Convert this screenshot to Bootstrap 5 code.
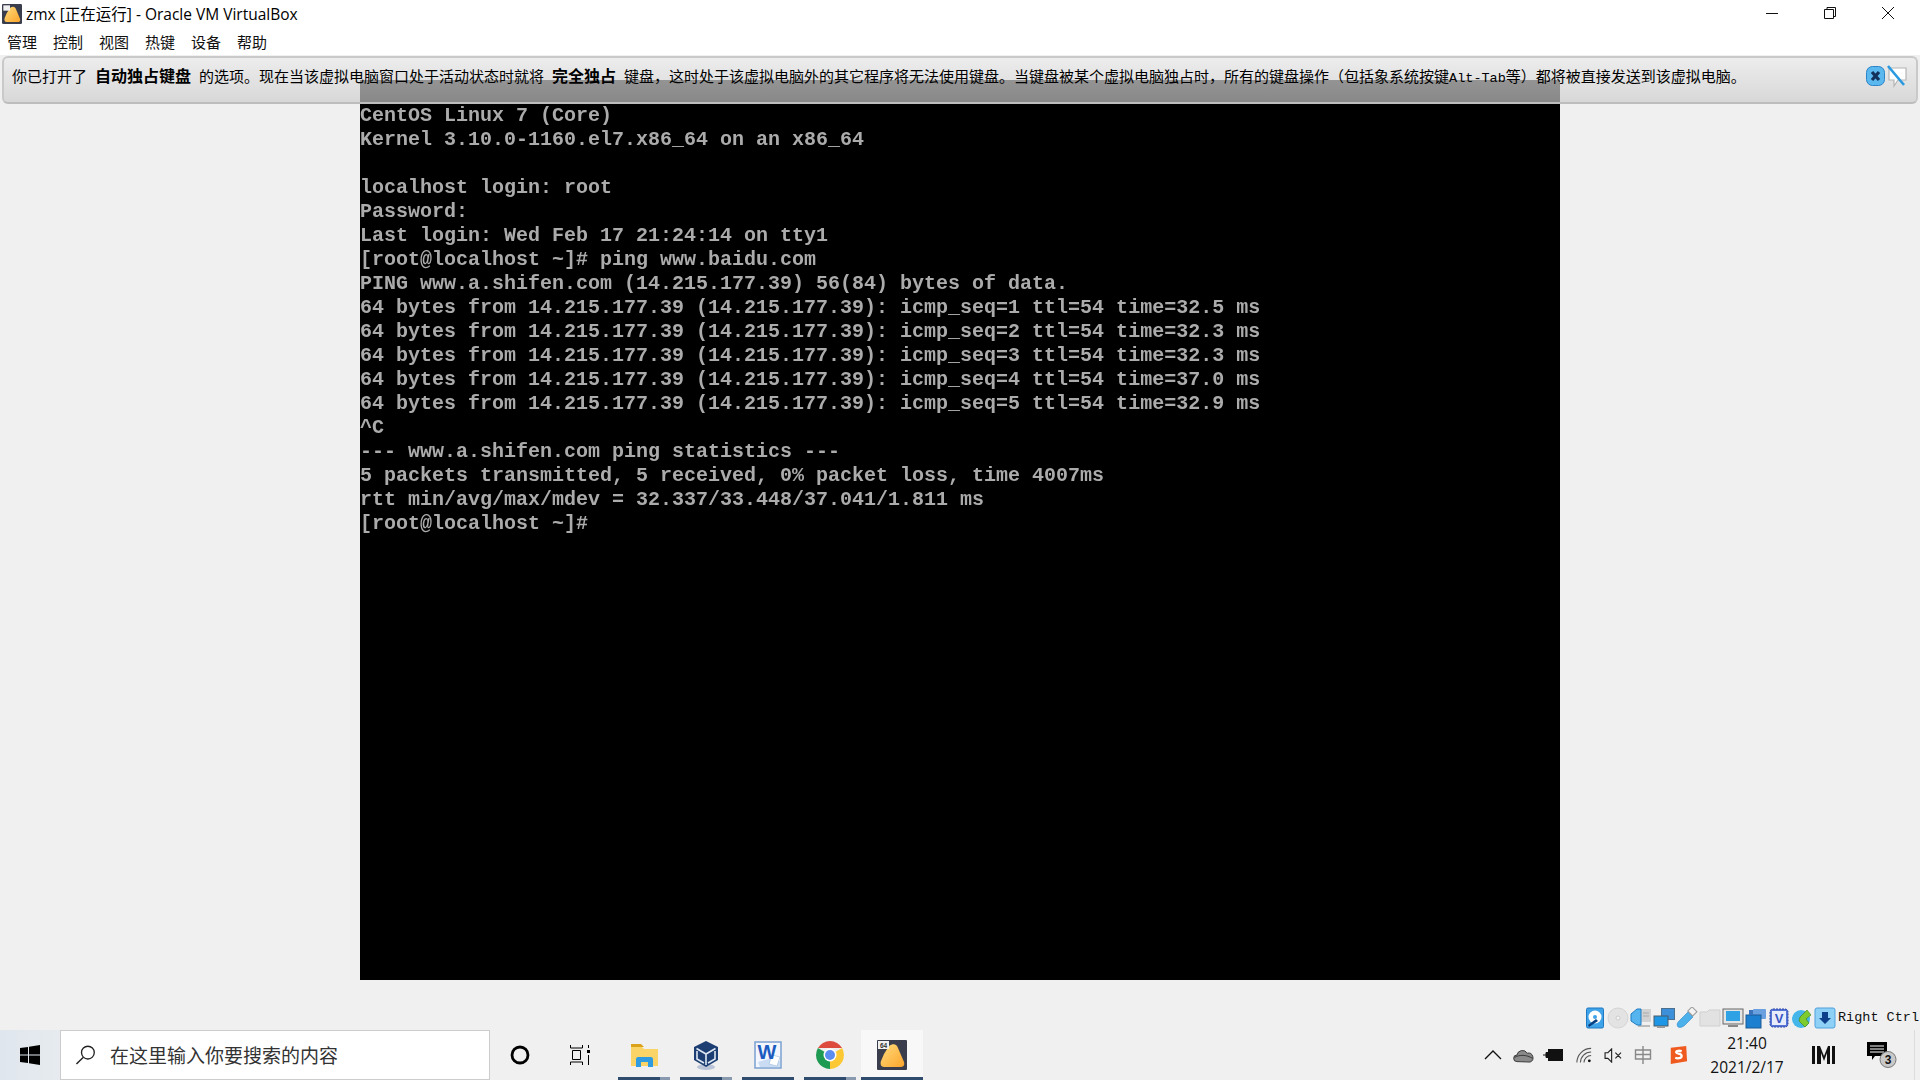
<!DOCTYPE html>
<html lang="zh">
<head>
<meta charset="utf-8">
<title>zmx [正在运行] - Oracle VM VirtualBox</title>
<link href="https://cdn.jsdelivr.net/npm/bootstrap@5.3.0/dist/css/bootstrap.min.css" rel="stylesheet">
<style>
html,body{height:1080px;overflow:hidden}
body{font-family:"Noto Sans CJK SC","Liberation Sans",sans-serif;background:#f0f0f0;color:#000}
.vb-window{height:1080px}
.vb-title{height:28px;background:#fff;font-size:15.5px;font-family:"Open Sans","Noto Sans CJK SC",sans-serif;padding-left:2px}
.vb-title svg{display:block}
.vb-title-text{padding-top:2px}
.vb-winbtns{padding-right:3px;padding-bottom:2px}
.vb-winbtn{width:58px;height:26px}
.vb-menu{height:27px;background:#fff;font-size:15px;padding-left:7px;gap:16px;padding-top:1px;color:#111}
.vb-stage{height:950px;background:#f0f0f0}
.vb-screen{width:1200px;height:900px;background:#000;padding-top:24px}
.vb-term{font-family:"Liberation Mono",monospace;font-size:20px;line-height:24px;color:#ababab;margin:0;overflow:hidden;font-weight:700;filter:blur(.35px)}
.vb-notice{top:1px;left:2px;right:2px;height:48px;border:2px solid #c9c9c9;border-bottom-color:#bdbdbd;border-radius:6px;background:linear-gradient(to bottom,rgba(235,235,235,.68),rgba(204,204,204,.667));padding:0 8px 7px;font-size:15px;color:#000}
.vb-notice b{font-weight:700;font-size:16px;margin:0 8px}
.vb-notice-text{white-space:nowrap}
.vb-notice-mono{font-family:"Liberation Mono",monospace;font-size:13.5px}
.vb-notice-icons{top:6px;right:9px;gap:1px}
.vb-status{height:25px;background:#f0f0f0;padding-right:1px;padding-top:2px;gap:1px}
.vb-status svg{margin-top:-2px}
.vb-stxt{font-family:"Liberation Mono",monospace;font-size:13.5px;margin-left:1px;white-space:nowrap;color:#111}
.vb-task{height:50px;background:linear-gradient(to right,#dfe6ed,#eef0f1 120px,#f0f0f0 400px)}
.vb-start{width:60px}
.vb-search{width:430px;height:50px;background:#fff;border:1px solid #ccc;padding-left:14px;font-size:19px;color:#333;gap:14px}
.vb-tb{width:60px;height:50px}
.vb-apps{margin-left:3px}
.vb-app{width:62px;height:50px}
.vb-app::after{content:"";position:absolute;left:5px;right:5px;bottom:0;height:3px;background:#2f4b6e}
.vb-app-part::after{background:linear-gradient(to right,#2f4b6e 80%,#8a9aae 80%)}
.vb-app-active{background:#f8f8f8}
.vb-app-active::after{left:0;right:0}
.vb-tray{font-family:"Open Sans","Noto Sans CJK SC",sans-serif;color:#111;height:50px}
.ts26{width:26px}.ts30{width:30px}.ts32{width:32px}.ts34{width:34px}.ts36{width:36px}.ts52{width:52px}.ts64{width:64px}.ts102{width:102px}
.vb-clock{font-size:15.5px;line-height:24px;text-align:center}
.vb-tray-sep{width:1px;height:50px;background:#dcdcdc;margin-right:5px}
</style>
</head>
<body>
<div class="vb-window d-flex flex-column">
  <div class="vb-title d-flex align-items-center">
    <svg width="20" height="20" viewBox="0 0 30 30" class="me-1"><defs><linearGradient id="blob1" x1="0" y1="0" x2="1" y2="1"><stop offset="0" stop-color="#ffdc7c"/><stop offset="1" stop-color="#fba52c"/></linearGradient></defs><rect width="30" height="30" rx="2" fill="#3a3d4c"/><path d="M12 6C16 3 20 4 21 8L27 22C28 26 26 27 23 27L7 27C4 27 3 24 4 21L7 14Z" fill="url(#blob1)"/><rect x="2" y="2" width="10" height="8" fill="#f0f0f0"/></svg>
    <span class="vb-title-text">zmx [正在运行] - Oracle VM VirtualBox</span>
    <div class="vb-winbtns d-flex ms-auto">
      <div class="vb-winbtn d-flex align-items-center justify-content-center"><svg width="12" height="12"><path d="M0 6.500h12" stroke="#111"/></svg></div>
      <div class="vb-winbtn d-flex align-items-center justify-content-center"><svg width="12" height="14"><path d="M.5 3.500h9v9h-9zM3 3.500V1.500h8.500v9H9.500" fill="none" stroke="#111"/></svg></div>
      <div class="vb-winbtn d-flex align-items-center justify-content-center"><svg width="14" height="14"><path d="M1 1l12 12M13 1L1 13" stroke="#111" fill="none"/></svg></div>
    </div>
  </div>
  <div class="vb-menu d-flex align-items-center">
    <span>管理</span><span>控制</span><span>视图</span><span>热键</span><span>设备</span><span>帮助</span>
  </div>
  <div class="vb-stage position-relative d-flex align-items-center justify-content-center">
    <div class="vb-screen">
<pre class="vb-term">CentOS Linux 7 (Core)
Kernel 3.10.0-1160.el7.x86_64 on an x86_64

localhost login: root
Password:
Last login: Wed Feb 17 21:24:14 on tty1
[root@localhost ~]# ping www.baidu.com
PING www.a.shifen.com (14.215.177.39) 56(84) bytes of data.
64 bytes from 14.215.177.39 (14.215.177.39): icmp_seq=1 ttl=54 time=32.5 ms
64 bytes from 14.215.177.39 (14.215.177.39): icmp_seq=2 ttl=54 time=32.3 ms
64 bytes from 14.215.177.39 (14.215.177.39): icmp_seq=3 ttl=54 time=32.3 ms
64 bytes from 14.215.177.39 (14.215.177.39): icmp_seq=4 ttl=54 time=37.0 ms
64 bytes from 14.215.177.39 (14.215.177.39): icmp_seq=5 ttl=54 time=32.9 ms
^C
--- www.a.shifen.com ping statistics ---
5 packets transmitted, 5 received, 0% packet loss, time 4007ms
rtt min/avg/max/mdev = 32.337/33.448/37.041/1.811 ms
[root@localhost ~]#</pre>
    </div>
    <div class="vb-notice position-absolute d-flex align-items-center">
      <span class="vb-notice-text">你已打开了<b>自动独占键盘</b>的选项。现在当该虚拟电脑窗口处于活动状态时就将<b>完全独占</b>键盘，这时处于该虚拟电脑外的其它程序将无法使用键盘。当键盘被某个虚拟电脑独占时，所有的键盘操作（包括象系统按键<span class="vb-notice-mono">Alt-Tab</span>等）都将被直接发送到该虚拟电脑。</span>
      <div class="vb-notice-icons position-absolute d-flex">
        <svg width="19" height="24" viewBox="0 0 19 24"><rect x="0.500" y="2.500" width="18" height="19" rx="6" fill="#5ab8ef" stroke="#2b84c7"/><path d="M6 8l7 8M13 8l-7 8" stroke="#12305a" stroke-width="3.200"/></svg>
        <svg width="21" height="24" viewBox="0 0 21 24"><path d="M3 4h17v12h-8l-4 6v-6H3z" fill="#fff" stroke="#b5b5b5" stroke-width="1.200"/><path d="M2 2l16 19" stroke="#2a9ae0" stroke-width="2.600"/></svg>
      </div>
    </div>
  </div>
  <div class="vb-status d-flex align-items-center justify-content-end">
    <svg width="22" height="22" viewBox="0 0 22 22"><rect x="2.500" y="1" width="17" height="20" rx="1.500" fill="#3ea3e8" stroke="#1f78c2"/><circle cx="11" cy="10" r="6.500" fill="#fff"/><circle cx="11" cy="10" r="2" fill="#3ea3e8"/><path d="M4 18l8-6 2 2-9 6z" fill="#0a3f80"/></svg>
    <svg width="22" height="22" viewBox="0 0 22 22"><circle cx="11" cy="11" r="10" fill="#e3e3e3" stroke="#d4d4d4"/><circle cx="11" cy="11" r="2" fill="#f5f5f5" stroke="#ccc"/></svg>
    <svg width="22" height="22" viewBox="0 0 22 22"><rect x="11" y="2" width="10" height="13" fill="#d2d2d2"/><path d="M13 6h6M13 9h6" stroke="#aaa"/><rect x="8" y="18" width="12" height="2" fill="#bbb"/><path d="M11 18H7L1 14V7l6-5h4z" fill="#56b5ee" stroke="#1d7dc4"/></svg>
    <svg width="22" height="22" viewBox="0 0 22 22"><rect x="8.500" y="1.500" width="13" height="11" fill="#3d8fd9" stroke="#4d6f8f"/><rect x="1" y="9" width="14" height="10" fill="#1d96e6" stroke="#4a5a68"/><rect x="4" y="19" width="8" height="2" fill="#999"/></svg>
    <svg width="22" height="22" viewBox="0 0 22 22"><path d="M2 20c-2-3 0-5 2-7l8-8 5 5-8 8c-2 2-5 3-7 2z" fill="#4cb0ea" stroke="#2a86c8" stroke-width=".6"/><rect x="13" y="1" width="7" height="6" transform="rotate(45 16 4)" fill="#f3f3f3" stroke="#999"/></svg>
    <svg width="22" height="22" viewBox="0 0 22 22"><path d="M1 5h7l2-2h11v16H1z" fill="#e2e2e2" stroke="#cfcfcf"/></svg>
    <svg width="22" height="22" viewBox="0 0 22 22"><rect x="1" y="2" width="20" height="15" fill="#e5e5e5" stroke="#666"/><rect x="4" y="4" width="14" height="10" fill="#2fa2e6"/><rect x="6" y="18" width="10" height="2" fill="#888"/></svg>
    <svg width="22" height="22" viewBox="0 0 22 22"><rect x="8" y="2" width="13" height="10" rx="1" fill="#6a9fe0"/><rect x="1" y="8" width="15" height="13" fill="#1d7fd0" stroke="#1a5a95"/><rect x="4" y="3" width="4" height="5" fill="#3b74bd"/></svg>
    <svg width="22" height="22" viewBox="0 0 22 22"><rect x="2" y="2" width="18" height="18" rx="3" fill="#5673d6" stroke="#2b45a8" stroke-dasharray="2 1"/><rect x="4" y="4" width="14" height="14" fill="#e8ecfa"/><text x="11" y="16" text-anchor="middle" font-size="13" font-weight="700" font-family="Liberation Sans" fill="#3a55c2">V</text></svg>
    <svg width="22" height="22" viewBox="0 0 22 22"><circle cx="10" cy="12" r="9" fill="#45b6ea"/><path d="M9 10l7-7 4 5-5 4 3 4-4 4-6-6z" fill="#7ecb2f" stroke="#3c7a11" stroke-width=".6"/></svg>
    <svg width="22" height="22" viewBox="0 0 22 22"><rect x="1" y="1" width="20" height="20" rx="2" fill="#8fd0f6" stroke="#4fa1de"/><path d="M8 5h6v6h3l-6 6-6-6h3z" fill="#0f3f8a"/></svg>
    <span class="vb-stxt">Right Ctrl</span>
  </div>
  <div class="vb-task d-flex align-items-center">
    <div class="vb-start d-flex justify-content-center align-items-center">
      <svg width="20" height="20" viewBox="0 0 20 20"><path d="M0 3l8-1v7.500H0zM9 1.800L20 0v9.500H9zM0 10.500h8V18l-8-1zM9 10.500h11V20L9 18.200z" fill="#000"/></svg>
    </div>
    <div class="vb-search d-flex align-items-center">
      <svg width="21" height="22" viewBox="0 0 22 22"><circle cx="13.500" cy="8.500" r="6.700" fill="none" stroke="#222" stroke-width="1.400"/><path d="M8.500 13.500L1.500 20.500" stroke="#222" stroke-width="1.500"/></svg>
      <span>在这里输入你要搜索的内容</span>
    </div>
    <div class="vb-tb d-flex justify-content-center align-items-center">
      <svg width="20" height="20" viewBox="0 0 20 20"><circle cx="10" cy="10" r="8" fill="none" stroke="#000" stroke-width="2.800"/></svg>
    </div>
    <div class="vb-tb d-flex justify-content-center align-items-center">
      <svg width="20" height="20" viewBox="0 0 20 20"><path d="M.5 0v3h12V0M2.500 5.500h8V14.500h-8zM.5 20v-3h12v3" fill="none" stroke="#000"/><rect x="17" y="5" width="3" height="3" fill="#000"/><path d="M18.500 10v10M18.500 0v3" stroke="#000"/></svg>
    </div>
    <div class="vb-apps d-flex">
      <div class="vb-app vb-app-part position-relative d-flex justify-content-center align-items-center">
        <svg width="27" height="23" viewBox="0 0 27 23"><path d="M0 3h11l2 2h14v17H0z" fill="#fbd468"/><path d="M0 0h10l3 3H0z" fill="#dba21c"/><path d="M5 23v-8c0-1 1-2 2-2h13c1 0 2 1 2 2v8h-5v-5h-7v5z" fill="#2f9be0"/></svg>
      </div>
      <div class="vb-app vb-app-part position-relative d-flex justify-content-center align-items-center">
        <svg width="26" height="29" viewBox="0 0 26 29"><ellipse cx="13" cy="26" rx="9" ry="3" fill="#b9c4d6"/><path d="M13 0l12 6v13l-12 7-12-7V6z" fill="#1c3e73"/><path d="M13 13v11M3.500 7.500l9.500 5.500 9.500-5.500M4 10v8l7 4M22 10v8l-7 4" stroke="#dfe8f3" stroke-width="1.600" fill="none"/></svg>
      </div>
      <div class="vb-app position-relative d-flex justify-content-center align-items-center">
        <svg width="28" height="28" viewBox="0 0 28 28"><rect x="1" y="1" width="26" height="26" fill="#f3f7fd" stroke="#7ba0cf" stroke-width="1.500"/><path d="M4 21l14-4 8 3v6H6z" fill="#c9dcf3"/><path d="M18 14l8 2-3 9-8-2z" fill="#fff" stroke="#9cb8da" stroke-width=".6"/><text x="13" y="18" text-anchor="middle" font-family="Liberation Sans" font-weight="700" font-size="20" fill="#1b5cc0">W</text></svg>
      </div>
      <div class="vb-app vb-app-part position-relative d-flex justify-content-center align-items-center">
        <svg width="28" height="28" viewBox="0 0 28 28"><path d="M1.900 7A14 14 0 0 1 26.100 7H14z" fill="#dd4b3e"/><path d="M26.100 7A14 14 0 0 1 14 28L14 14z" fill="#fcc934"/><path d="M14 28A14 14 0 0 1 1.900 7L14 14z" fill="#1e9a53"/><circle cx="14" cy="14" r="6.500" fill="#fff"/><circle cx="14" cy="14" r="5" fill="#5b8df0"/></svg>
      </div>
      <div class="vb-app vb-app-active position-relative d-flex justify-content-center align-items-center">
        <svg width="30" height="30" viewBox="0 0 30 30"><defs><linearGradient id="blob2" x1="0" y1="0" x2="1" y2="1"><stop offset="0" stop-color="#ffdc7c"/><stop offset="1" stop-color="#fba52c"/></linearGradient></defs><rect width="30" height="30" rx="1" fill="#3a3d4c"/><path d="M12 6C16 3 20 4 21 8L27 22C28 26 26 27 23 27L7 27C4 27 3 24 4 21L7 14Z" fill="url(#blob2)"/><rect x="1" y="1" width="11" height="8" fill="#f0f0f0"/><text x="6.500" y="7.500" text-anchor="middle" font-size="6.500" font-weight="700" font-family="Liberation Sans" fill="#333">64</text></svg>
      </div>
    </div>
    <div class="vb-tray ms-auto d-flex align-items-center">
      <div class="ts30 d-flex justify-content-center"><svg width="18" height="10" viewBox="0 0 18 10"><path d="M1 9l8-8 8 8" fill="none" stroke="#111" stroke-width="1.300"/></svg></div>
      <div class="ts30 d-flex justify-content-center"><svg width="21" height="15" viewBox="0 0 22 16"><path d="M4 14.500a3.500 3.500 0 0 1 0-7 6 6 0 0 1 11-2 5 5 0 0 1 3 9.500z" fill="#8a8a8a" stroke="#333"/><path d="M1.500 10c5-3 13-3 19 1" fill="none" stroke="#333"/></svg></div>
      <div class="ts30 d-flex justify-content-center"><svg width="20" height="12" viewBox="0 0 20 12"><rect x="5.500" y=".5" width="14" height="11" fill="#111" stroke="#111"/><path d="M0 6h3M3 3.500h2.500v5H3z" fill="#111" stroke="#111"/></svg></div>
      <div class="ts32 d-flex justify-content-center"><svg width="16" height="17" viewBox="0 0 18 18"><path d="M1 17A16 16 0 0 1 17 1M5 17A12 12 0 0 1 17 5M9 17a8 8 0 0 1 8-8" fill="none" stroke="#555" stroke-width="1.200"/><circle cx="15" cy="15" r="1.600" fill="#111"/></svg></div>
      <div class="ts26 d-flex justify-content-center"><svg width="19" height="15" viewBox="0 0 20 16"><path d="M1 5h3l4-4v14l-4-4H1zM12 5l6 6M18 5l-6 6" fill="none" stroke="#222" stroke-width="1.200"/></svg></div>
      <div class="ts34 d-flex justify-content-center"><svg width="18" height="20" viewBox="0 0 18 20"><path d="M1.500 5h15v9h-15zM9 1v18M1.500 9.500h15" fill="none" stroke="#888" stroke-width="1.400"/></svg></div>
      <div class="ts36 d-flex justify-content-center"><svg width="20" height="20" viewBox="0 0 22 22"><path d="M3 3l17-2 1 17-18 3z" fill="#ef5a1f"/><path d="M15 7c-2-1-6-1-6 1s6 1 6 4-5 3-7 2" fill="none" stroke="#fff" stroke-width="2.500"/></svg></div>
      <div class="vb-clock ts102"><div>21:40</div><div>2021/2/17</div></div>
      <div class="ts52 d-flex justify-content-center"><svg width="24" height="18" viewBox="0 0 24 18"><path d="M0 0h3v18H0zM5 0h3l4 10 4-10h2v18h-3V7l-3 8-3-8v11H5zM20 0h3v18h-3z" fill="#111"/></svg></div>
      <div class="ts64 d-flex justify-content-center"><svg width="30" height="26" viewBox="0 0 30 26"><path d="M0 0h20v14H8l-3 4v-4H0z" fill="#000"/><path d="M3 4h14M3 7h14M3 10h14" stroke="#fff"/><circle cx="21" cy="17.500" r="8" fill="#c9c9c9" stroke="#777"/><text x="21" y="22" text-anchor="middle" font-size="12" font-weight="700" font-family="Liberation Sans" fill="#111">3</text></svg></div>
      <div class="vb-tray-sep"></div>
    </div>
  </div>
</div>
</body>
</html>
